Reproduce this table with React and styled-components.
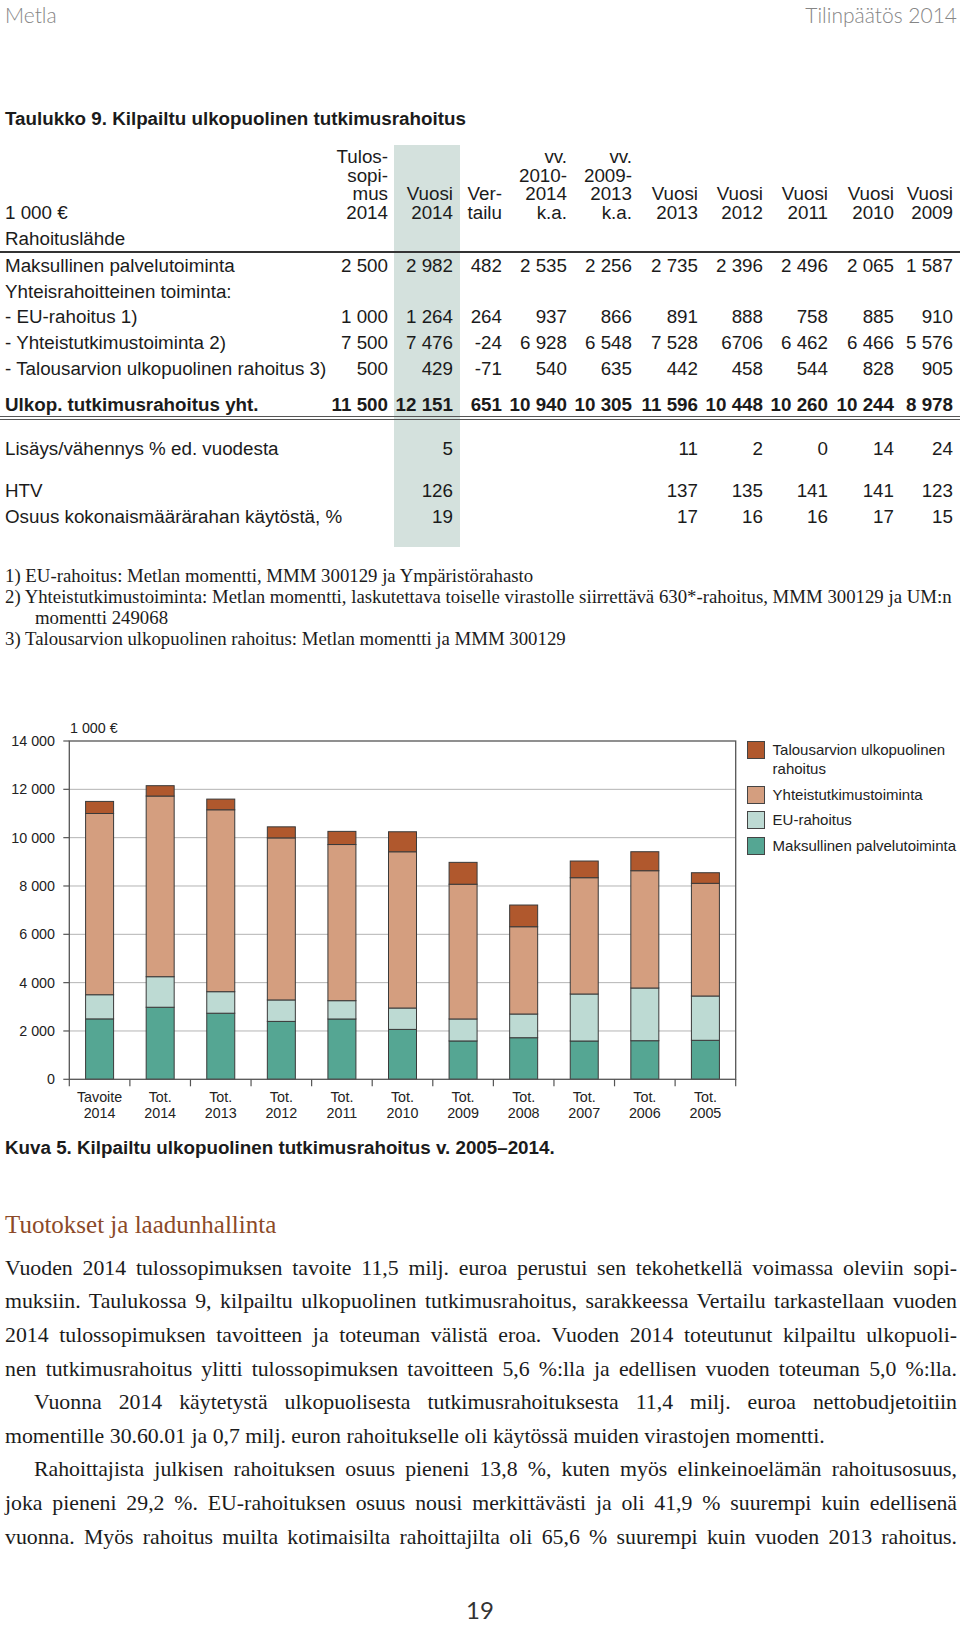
import React from 'react';
import styled, { createGlobalStyle } from 'styled-components';

const GlobalStyle = createGlobalStyle`
	html, body {
		margin: 0;
		padding: 0;
		background: #fff;
	}
	body {
		font-family: "Liberation Sans", Arial, sans-serif;
		color: #1b1b1b;
	}
	* {
		box-sizing: border-box;
	}
`;

const Page = styled.div`
	width: 960px;
	height: 1625px;
	overflow: hidden;
`;

const TopBar = styled.header`
	display: flex;
	justify-content: space-between;
	align-items: center;
	height: 28px;
	padding: 0 3px 0 5px;
	font-family: Lato, "Open Sans", sans-serif;
	font-weight: 300;
	font-size: 21px;
	color: #858585;
`;

const Title = styled.h2`
	margin: 80px 0 0;
	padding-left: 5px;
	font-size: 18.8px;
	line-height: 22px;
	font-weight: bold;
`;

const columns = '325px 65px 65px 49px 65px 65px 66px 65px 65px 66px 59px';

const Table = styled.div`
	margin-top: 15px;
	font-size: 18.8px;
	background: linear-gradient(
		to right,
		transparent 394px,
		#d4e1dd 394px,
		#d4e1dd 460px,
		transparent 460px
	);
`;

const Row = styled.div`
	display: grid;
	grid-template-columns: ${columns};
	align-items: end;
	padding-left: 5px;
	padding-top: ${(p) => p.$top || 0}px;
	padding-bottom: ${(p) => p.$bottom || 0}px;
	line-height: ${(p) => p.$lh || 25.7}px;
	font-weight: ${(p) => (p.$bold ? 'bold' : 'normal')};
	border-bottom: ${(p) =>
		p.$rule === 'single'
			? '2px solid #333'
			: p.$rule === 'double'
			? '4px double #555'
			: 'none'};
`;

const Label = styled.div`
	white-space: nowrap;
`;

const Num = styled.div`
	text-align: right;
	padding-right: 7px;
	white-space: nowrap;
`;

const Notes = styled.div`
	margin-top: 17.5px;
	padding-left: 5px;
	font-family: "Liberation Serif", "Times New Roman", serif;
	font-size: 18.8px;
	line-height: 21px;
	white-space: nowrap;
`;

const Note = styled.p`
	margin: 0;
	padding-left: ${(p) => (p.$indent ? 30 : 0)}px;
`;

const ChartWrap = styled.div`
	display: flex;
	margin-top: 46px;
	height: 430px;
`;

const Legend = styled.ul`
	list-style: none;
	margin: 46.7px 0 0;
	padding: 0;
	display: flex;
	flex-direction: column;
	gap: 7.6px;
	width: 213px;
	font-size: 15px;
	line-height: 18.3px;
	color: #222;
`;

const LegendItem = styled.li`
	display: flex;
	align-items: flex-start;
	gap: 7.6px;
`;

const Swatch = styled.span`
	flex: none;
	width: 18px;
	height: 18px;
	border: 1px solid #444;
	background: ${(p) => p.$color};
`;

const Caption = styled.div`
	margin-top: 12.7px;
	padding-left: 5px;
	font-size: 18.8px;
	line-height: 22px;
	font-weight: bold;
`;

const Heading = styled.h3`
	margin: 50.7px 0 0;
	padding-left: 5px;
	font-family: "Liberation Serif", "Times New Roman", serif;
	font-weight: normal;
	font-size: 25px;
	line-height: 30px;
	color: #8c4a28;
`;

const Body = styled.div`
	margin-top: 11.7px;
	padding: 0 3px 0 5px;
	font-family: "Liberation Serif", "Times New Roman", serif;
	font-size: 21.8px;
	line-height: 33.6px;
	color: #1b1b1b;
`;

const Line = styled.div`
	text-align: justify;
	text-align-last: ${(p) => (p.$last ? 'left' : 'justify')};
	padding-left: ${(p) => (p.$indent ? 29 : 0)}px;
`;

const PageNumber = styled.div`
	margin-top: 40.5px;
	text-align: center;
	font-family: Lato, "Open Sans", sans-serif;
	font-size: 24px;
	line-height: 30px;
	color: #333;
`;

const bodyRows = [
	['Maksullinen palvelutoiminta', '2 500', '2 982', '482', '2 535', '2 256', '2 735', '2 396', '2 496', '2 065', '1 587'],
	['Yhteisrahoitteinen toiminta:'],
	['- EU-rahoitus 1)', '1 000', '1 264', '264', '937', '866', '891', '888', '758', '885', '910'],
	['- Yhteistutkimustoiminta 2)', '7 500', '7 476', '-24', '6 928', '6 548', '7 528', '6706', '6 462', '6 466', '5 576'],
	['- Talousarvion ulkopuolinen rahoitus 3)', '500', '429', '-71', '540', '635', '442', '458', '544', '828', '905'],
];

const totalRow = ['Ulkop. tutkimusrahoitus yht.', '11 500', '12 151', '651', '10 940', '10 305', '11 596', '10 448', '10 260', '10 244', '8 978'];

const extraRows = [
	{ top: 16, cells: ['Lisäys/vähennys % ed. vuodesta', '', '5', '', '', '', '11', '2', '0', '14', '24'] },
	{ top: 16.4, cells: ['HTV', '', '126', '', '', '', '137', '135', '141', '141', '123'] },
	{ top: 0, bottom: 17, cells: ['Osuus kokonaismäärärahan käytöstä, %', '', '19', '', '', '', '17', '16', '16', '17', '15'] },
];

const headCells = [
	['Tulos-', 'sopi-', 'mus', '2014'],
	['Vuosi', '2014'],
	['Ver-', 'tailu'],
	['vv.', '2010-', '2014', 'k.a.'],
	['vv.', '2009-', '2013', 'k.a.'],
	['Vuosi', '2013'],
	['Vuosi', '2012'],
	['Vuosi', '2011'],
	['Vuosi', '2010'],
	['Vuosi', '2009'],
];

const renderCells = (cells) =>
	cells.map((c, i) =>
		i === 0 ? <Label key={i}>{c}</Label> : <Num key={i}>{c}</Num>
	);

// chart geometry (svg starts at page y 695)
const Y0 = 384.3;
const K = 338.3 / 14000;
const X0 = 69.3;
const PW = 666.4;
const CW = PW / 11;
const segColors = ['#55a693', '#bddad3', '#d49e7f', '#b0582d'];

const bars = [
	{ a: 'Tavoite', b: '2014', v: [2500, 1000, 7500, 500] },
	{ a: 'Tot.', b: '2014', v: [2982, 1264, 7476, 429] },
	{ a: 'Tot.', b: '2013', v: [2735, 891, 7528, 442] },
	{ a: 'Tot.', b: '2012', v: [2396, 888, 6706, 458] },
	{ a: 'Tot.', b: '2011', v: [2496, 758, 6462, 544] },
	{ a: 'Tot.', b: '2010', v: [2065, 885, 6466, 828] },
	{ a: 'Tot.', b: '2009', v: [1587, 910, 5576, 905] },
	{ a: 'Tot.', b: '2008', v: [1721, 981, 3612, 898] },
	{ a: 'Tot.', b: '2007', v: [1585, 1945, 4813, 690] },
	{ a: 'Tot.', b: '2006', v: [1597, 2181, 4854, 786] },
	{ a: 'Tot.', b: '2005', v: [1614, 1833, 4663, 439] },
];

const ticks = [0, 2000, 4000, 6000, 8000, 10000, 12000, 14000];
const fmt = (n) => (n >= 1000 ? `${Math.floor(n / 1000)} ${String(n % 1000).padStart(3, '0')}` : String(n));

const Chart = () => (
	<svg width="747" height="430" viewBox="0 0 747 430" fontFamily="Liberation Sans, Arial, sans-serif">
		<text x="70" y="38" fontSize="14.3" fill="#222">1 000 €</text>
		{ticks.slice(1, -1).map((t) => (
			<line key={t} x1={X0} x2={X0 + PW} y1={Y0 - t * K} y2={Y0 - t * K} stroke="#b4b4b4" strokeWidth="1" />
		))}
		{ticks.map((t) => (
			<g key={t}>
				<line x1={X0 - 6} x2={X0} y1={Y0 - t * K} y2={Y0 - t * K} stroke="#555" strokeWidth="1.2" />
				<text x="55" y={Y0 - t * K + 5} fontSize="14.3" fill="#222" textAnchor="end">{fmt(t)}</text>
			</g>
		))}
		{Array.from({ length: 12 }, (_, i) => (
			<line key={i} x1={X0 + i * CW} x2={X0 + i * CW} y1={Y0} y2={Y0 + 7} stroke="#555" strokeWidth="1.2" />
		))}
		{bars.map((bar, i) => {
			const cx = X0 + (i + 0.5) * CW;
			let acc = 0;
			return (
				<g key={i}>
					{bar.v.map((v, j) => {
						const y1 = Y0 - (acc + v) * K;
						acc += v;
						return (
							<rect key={j} x={cx - 14} y={y1} width="28" height={v * K} fill={segColors[j]} stroke="#3a3a3a" strokeWidth="1" />
						);
					})}
					<text x={cx} y="406.7" fontSize="14.3" fill="#222" textAnchor="middle">{bar.a}</text>
					<text x={cx} y="423" fontSize="14.3" fill="#222" textAnchor="middle">{bar.b}</text>
				</g>
			);
		})}
		<rect x={X0} y={Y0 - 14000 * K} width={PW} height={14000 * K} fill="none" stroke="#555" strokeWidth="1.3" />
	</svg>
);

const legend = [
	{ color: '#b0582d', text: 'Talousarvion ulkopuolinen rahoitus' },
	{ color: '#d49e7f', text: 'Yhteistutkimustoiminta' },
	{ color: '#bddad3', text: 'EU-rahoitus' },
	{ color: '#55a693', text: 'Maksullinen palvelutoiminta' },
];

const App = () => (
	<Page>
		<GlobalStyle />
		<TopBar>
			<span>Metla</span>
			<span>Tilinpäätös 2014</span>
		</TopBar>

		<Title>Taulukko 9. Kilpailtu ulkopuolinen tutkimusrahoitus</Title>

		<Table>
			<Row $lh={18.7} $top={3}>
				<Label>1 000 €</Label>
				{headCells.map((lines, i) => (
					<Num key={i}>
						{lines.map((l, j) => (
							<div key={j}>{l}</div>
						))}
					</Num>
				))}
			</Row>
			<Row $lh={24} $top={4} $rule="single">
				<Label>Rahoituslähde</Label>
			</Row>
			{bodyRows.map((r, i) => (
				<Row key={i}>{renderCells(r)}</Row>
			))}
			<Row $lh={22} $top={12.5} $bold $rule="double">
				{renderCells(totalRow)}
			</Row>
			{extraRows.map((r, i) => (
				<Row key={i} $lh={26} $top={r.top} $bottom={r.bottom}>
					{renderCells(r.cells)}
				</Row>
			))}
		</Table>

		<Notes>
			<Note>1) EU-rahoitus: Metlan momentti, MMM 300129 ja Ympäristörahasto</Note>
			<Note>2) Yhteistutkimustoiminta: Metlan momentti, laskutettava toiselle virastolle siirrettävä 630*-rahoitus, MMM 300129 ja UM:n</Note>
			<Note $indent>momentti 249068</Note>
			<Note>3) Talousarvion ulkopuolinen rahoitus: Metlan momentti ja MMM 300129</Note>
		</Notes>

		<ChartWrap>
			<Chart />
			<Legend>
				{legend.map((l) => (
					<LegendItem key={l.text}>
						<Swatch $color={l.color} />
						<span>{l.text}</span>
					</LegendItem>
				))}
			</Legend>
		</ChartWrap>

		<Caption>Kuva 5. Kilpailtu ulkopuolinen tutkimusrahoitus v. 2005–2014.</Caption>

		<Heading>Tuotokset ja laadunhallinta</Heading>

		<Body>
			<Line>Vuoden 2014 tulossopimuksen tavoite 11,5 milj. euroa perustui sen tekohetkellä voimassa oleviin sopi-</Line>
			<Line>muksiin. Taulukossa 9, kilpailtu ulkopuolinen tutkimusrahoitus, sarakkeessa Vertailu tarkastellaan vuoden</Line>
			<Line>2014 tulossopimuksen tavoitteen ja toteuman välistä eroa. Vuoden 2014 toteutunut kilpailtu ulkopuoli-</Line>
			<Line>nen tutkimusrahoitus ylitti tulossopimuksen tavoitteen 5,6 %:lla ja edellisen vuoden toteuman 5,0 %:lla.</Line>
			<Line $indent>Vuonna 2014 käytetystä ulkopuolisesta tutkimusrahoituksesta 11,4 milj. euroa nettobudjetoitiin</Line>
			<Line $last>momentille 30.60.01 ja 0,7 milj. euron rahoitukselle oli käytössä muiden virastojen momentti.</Line>
			<Line $indent>Rahoittajista julkisen rahoituksen osuus pieneni 13,8 %, kuten myös elinkeinoelämän rahoitusosuus,</Line>
			<Line>joka pieneni 29,2 %. EU-rahoituksen osuus nousi merkittävästi ja oli 41,9 % suurempi kuin edellisenä</Line>
			<Line>vuonna. Myös rahoitus muilta kotimaisilta rahoittajilta oli 65,6 % suurempi kuin vuoden 2013 rahoitus.</Line>
		</Body>

		<PageNumber>19</PageNumber>
	</Page>
);

export default App;
